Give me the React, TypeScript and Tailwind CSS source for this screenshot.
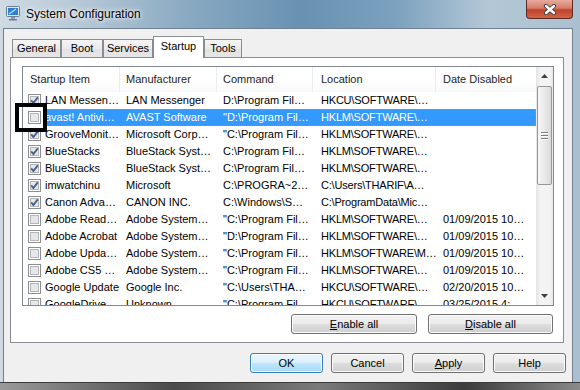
import React from "react";

type Row = { on: boolean; name: string; maker: string; cmd: string; loc: string; date: string; sel?: boolean };

const rows: Row[] = [
  { on: true, name: "LAN Messen…", maker: "LAN Messenger", cmd: "D:\\Program Fil…", loc: "HKCU\\SOFTWARE\\…", date: "" },
  { on: false, name: "avast! Antivi…", maker: "AVAST Software", cmd: "\"D:\\Program Fil…", loc: "HKLM\\SOFTWARE\\…", date: "", sel: true },
  { on: true, name: "GrooveMonit…", maker: "Microsoft Corp…", cmd: "\"C:\\Program Fil…", loc: "HKLM\\SOFTWARE\\…", date: "" },
  { on: true, name: "BlueStacks", maker: "BlueStack Syst…", cmd: "C:\\Program Fil…", loc: "HKLM\\SOFTWARE\\…", date: "" },
  { on: true, name: "BlueStacks", maker: "BlueStack Syst…", cmd: "C:\\Program Fil…", loc: "HKLM\\SOFTWARE\\…", date: "" },
  { on: true, name: "imwatchinu", maker: "Microsoft", cmd: "C:\\PROGRA~2…", loc: "C:\\Users\\THARIF\\A…", date: "" },
  { on: true, name: "Canon Adva…", maker: "CANON INC.", cmd: "C:\\Windows\\S…", loc: "C:\\ProgramData\\Mic…", date: "" },
  { on: false, name: "Adobe Read…", maker: "Adobe System…", cmd: "\"C:\\Program Fil…", loc: "HKLM\\SOFTWARE\\…", date: "01/09/2015 10…" },
  { on: false, name: "Adobe Acrobat", maker: "Adobe System…", cmd: "\"D:\\Program Fil…", loc: "HKLM\\SOFTWARE\\…", date: "01/09/2015 10…" },
  { on: false, name: "Adobe Upda…", maker: "Adobe System…", cmd: "\"C:\\Program Fil…", loc: "HKLM\\SOFTWARE\\M…", date: "01/09/2015 10…" },
  { on: false, name: "Adobe CS5 …", maker: "Adobe System…", cmd: "\"C:\\Program Fil…", loc: "HKLM\\SOFTWARE\\…", date: "01/09/2015 10…" },
  { on: false, name: "Google Update", maker: "Google Inc.", cmd: "\"C:\\Users\\THA…", loc: "HKCU\\SOFTWARE\\…", date: "02/20/2015 10…" },
  { on: false, name: "GoogleDrive", maker: "Unknown", cmd: "\"C:\\Program Fil…", loc: "HKCU\\SOFTWARE\\…", date: "03/25/2015 4:…" },
];

function Check({ on }: { on: boolean }) {
  return (
    <svg width="13" height="13" viewBox="0 0 13 13" className="shrink-0">
      <rect x="0.5" y="0.5" width="12" height="12" fill="#fff" stroke="#8e8f8f" />
      <rect x="2.5" y="2.5" width="8" height="8" fill="#e6e7e9" stroke="#b3b7bd" />
      {on && <path d="M3.2 6.4 L5.4 9 L9.8 3.4" fill="none" stroke="#4b5f86" strokeWidth="1.9" />}
    </svg>
  );
}

function Btn({ children, def, w }: { children: React.ReactNode; def?: boolean; w: string }) {
  return (
    <div
      className={`flex h-[20px] items-center justify-center rounded-[3px] border shadow-[inset_0_0_0_1px_#fcfcfc] ${w} ${
        def
          ? "border-[#3c7fb1] bg-[linear-gradient(to_bottom,#eaf6fd_0%,#d9f0fc_50%,#bee6fd_51%,#a7d9f5_100%)]"
          : "border-[#707070] bg-[linear-gradient(to_bottom,#f2f2f2_0%,#ebebeb_50%,#dddddd_51%,#cfcfcf_100%)]"
      }`}
    >
      {children}
    </div>
  );
}

function Tab({ label, w, sel }: { label: string; w: string; sel?: boolean }) {
  return sel ? (
    <div className={`relative z-10 -mb-px flex h-[22px] items-center justify-center border border-b-0 border-[#898c95] bg-white pb-[2px] ${w}`}>
      {label}
    </div>
  ) : (
    <div
      className={`flex h-[18px] items-center justify-center border border-b-0 border-[#898c95] bg-[linear-gradient(to_bottom,#f5f5f5,#ebebeb_50%,#e2e2e2_51%,#e6e6e6)] ${w}`}
    >
      {label}
    </div>
  );
}

export default function App() {
  return (
    <div className="relative h-[390px] w-[580px] overflow-hidden bg-[linear-gradient(to_right,#cfdae3_0%,#b6c8d6_14%,#8aaac2_32%,#6891b2_52%,#7ba1be_68%,#b3c7d6_84%,#aac0d1_100%)] font-['Liberation_Sans',Arial,sans-serif] text-[11px] text-black">
      {/* title bar */}
      <div className="flex h-[28px] items-start">
        <svg width="14" height="15" viewBox="0 0 14 15" className="ml-[6px] mt-[6px]">
          <rect x="0.5" y="0.5" width="13" height="10" rx="1" fill="#dfe6ee" stroke="#6d7f93" />
          <rect x="2" y="2" width="10" height="7" fill="#2d7fd6" />
          <path d="M3 8 L10 3" stroke="#bfe2ff" strokeWidth="1.2" />
          <rect x="5" y="11" width="4" height="2" fill="#8e9aa6" />
          <rect x="3" y="13" width="8" height="1.5" fill="#6d7f93" />
        </svg>
        <span className="ml-[6px] mt-[7px] text-[12px] leading-[14px] [text-shadow:0_0_6px_#ffffff,0_0_3px_#ffffff]">
          System Configuration
        </span>
        <div className="ml-auto mr-[7px] flex h-[19px] w-[47px] items-center justify-center rounded-b-[4px] border border-t-0 border-[#5b2a23] bg-[linear-gradient(to_bottom,#e8aa9c_0%,#d67d6c_45%,#c2402a_55%,#d2654a_100%)]">
          <svg width="14" height="11" viewBox="0 0 14 11">
            <path d="M3 2 L11 9 M11 2 L3 9" stroke="#3e3e3e" strokeWidth="4.2" strokeLinecap="round" />
            <path d="M3 2 L11 9 M11 2 L3 9" stroke="#ffffff" strokeWidth="2.4" strokeLinecap="round" />
          </svg>
        </div>
      </div>

      {/* client area */}
      <div className="ml-[3px] h-[354px] w-[570px] border border-b-0 border-[#71808e] bg-[#f0f0f0]">
        <div className="ml-[8px] mt-[7px] flex h-[21px] items-end">
          <Tab label="General" w="w-[49px]" />
          <Tab label="Boot" w="w-[42px]" />
          <Tab label="Services" w="w-[50px]" />
          <Tab label="Startup" w="w-[51px]" sel />
          <Tab label="Tools" w="w-[38px]" />
        </div>

        <div className="ml-[6px] h-[286px] w-[554px] border border-[#898c95] bg-white pl-[11px] pt-[8px]">
          <div className="flex h-[240px] w-[532px] overflow-hidden border border-[#828790]">
            <div className="flex-1 overflow-hidden">
              <div className="flex h-[25px] items-center bg-[linear-gradient(to_bottom,#ffffff,#ffffff_60%,#f7f8f9)] text-[#1e1e1e]">
                <div className="flex h-full w-[97px] items-center border-r border-[#eaecef] pl-[7px]">Startup Item</div>
                <div className="flex h-full w-[97px] items-center border-r border-[#eaecef] pl-[6px]">Manufacturer</div>
                <div className="flex h-full w-[96px] items-center border-r border-[#eaecef] pl-[6px]">Command</div>
                <div className="flex h-full w-[123px] items-center border-r border-[#eaecef] pl-[8px]">Location</div>
                <div className="flex h-full flex-1 items-center pl-[7px]">Date Disabled</div>
              </div>
              {rows.map((r, i) => (
                <div key={i} className="flex h-[17px] items-center whitespace-nowrap leading-[17px]">
                  <div className="flex w-[20px] shrink-0 items-center pl-[5px]">
                    <Check on={r.on} />
                  </div>
                  <div
                    className={`flex h-full flex-1 ${
                      r.sel ? "bg-[#3399ff] text-white outline-1 -outline-offset-1 outline-dotted outline-[#c98a2b]" : ""
                    }`}
                  >
                    <div className="w-[77px] overflow-hidden pl-[2px]">{r.name}</div>
                    <div className="w-[97px] overflow-hidden pl-[6px]">{r.maker}</div>
                    <div className="w-[96px] overflow-hidden pl-[6px]">{r.cmd}</div>
                    <div className="w-[123px] pl-[8px] tracking-[-0.2px]">{r.loc}</div>
                    <div className="flex-1 overflow-hidden pl-[7px]">{r.date}</div>
                  </div>
                </div>
              ))}
            </div>

            {/* scrollbar */}
            <div className="flex w-[17px] shrink-0 flex-col bg-[linear-gradient(to_right,#e4e4e4,#f3f3f3_25%,#f3f3f3_80%,#e9e9e9)]">
              <div className="flex h-[18px] items-center justify-center">
                <svg width="7" height="4" viewBox="0 0 7 4">
                  <path d="M0 4 L3.5 0 L7 4 Z" fill="#3f3f3f" />
                </svg>
              </div>
              <div className="mx-[1px] mt-[1px] flex h-[99px] flex-col items-center justify-center gap-[2px] rounded-[2px] border border-[#979797] bg-[linear-gradient(to_right,#f6f6f6,#e9e9e9_50%,#d9d9d9)]">
                <div className="h-px w-[7px] bg-[#7c7c7c] shadow-[0_1px_0_#ffffff]" />
                <div className="h-px w-[7px] bg-[#7c7c7c] shadow-[0_1px_0_#ffffff]" />
                <div className="h-px w-[7px] bg-[#7c7c7c] shadow-[0_1px_0_#ffffff]" />
              </div>
              <div className="flex-1" />
              <div className="flex h-[18px] items-center justify-center">
                <svg width="7" height="4" viewBox="0 0 7 4">
                  <path d="M0 0 L7 0 L3.5 4 Z" fill="#3f3f3f" />
                </svg>
              </div>
            </div>
          </div>

          <div className="mt-[8px] flex w-[532px] justify-end gap-[11px] pr-[1px]">
            <Btn w="w-[126px]">
              <span className="underline">E</span>nable all
            </Btn>
            <Btn w="w-[125px]">
              <span className="underline">D</span>isable all
            </Btn>
          </div>
        </div>

        <div className="mt-[10px] flex justify-end gap-[8px] pr-[6px]">
          <Btn w="w-[73px]" def>
            OK
          </Btn>
          <Btn w="w-[73px]">Cancel</Btn>
          <Btn w="w-[73px]">
            <span className="underline">A</span>pply
          </Btn>
          <Btn w="w-[73px]">Help</Btn>
        </div>
      </div>

      {/* bottom frame */}
      <div className="h-[8px] border-t border-[#3a3a3a] bg-[linear-gradient(to_right,#9a9a9a,#4a4a4a_30%,#7a7a7a_55%,#3c3c3c_80%,#8a8a8a)]" />

      {/* annotation box */}
      <div className="absolute left-[15px] top-[103px] h-[29px] w-[32px] border-4 border-black" />
    </div>
  );
}
